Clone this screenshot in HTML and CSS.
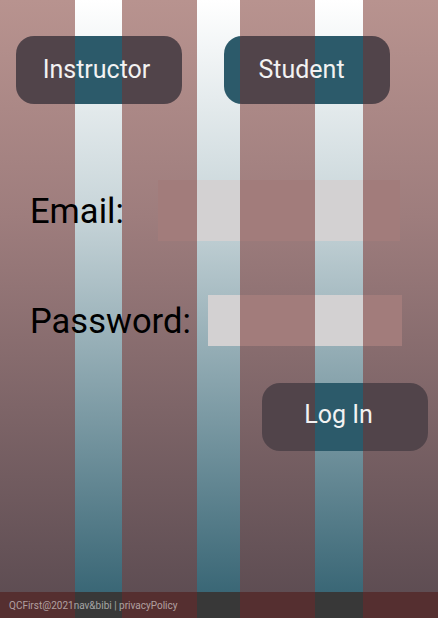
FILE: index.html
```html
<!DOCTYPE html>
<html lang="en">
<head>
<meta charset="utf-8">
<title>QCFirst Login</title>
<link rel="stylesheet" href="styles.css">
</head>
<body>
<div class="page">
  <main class="main">
    <div class="roles">
      <button class="btn btn-instructor">Instructor</button>
      <button class="btn btn-student">Student</button>
    </div>
    <form class="form">
      <div class="row row-email">
        <label class="label" for="email">Email:</label>
        <input class="field field-email" id="email" type="text">
      </div>
      <div class="row row-pass">
        <label class="label" for="pass">Password:</label>
        <input class="field field-pass" id="pass" type="password">
      </div>
      <div class="row-submit">
        <button type="button" class="btn btn-login">Log In</button>
      </div>
    </form>
  </main>
  <footer class="footer">QCFirst@2021nav&amp;bibi | privacyPolicy</footer>
</div>
</body>
</html>
```
FILE: styles.css
```css
html, body {
  margin: 0;
  padding: 0;
}
body {
  width: 438px;
  height: 618px;
  overflow: hidden;
  font-family: Roboto, "Noto Sans", sans-serif;
}
.page {
  height: 618px;
  display: flex;
  flex-direction: column;
  background:
    linear-gradient(#ffffff, #c9d6da 35%, #3a6776) 75px 0 / 47px 592px no-repeat,
    linear-gradient(#ffffff, #c9d6da 35%, #3a6776) 197px 0 / 43px 592px no-repeat,
    linear-gradient(#ffffff, #c9d6da 35%, #3a6776) 315px 0 / 48px 592px no-repeat,
    linear-gradient(#b8938f, #9e7d7d 35%, #5a4a50);
}
.main {
  flex: 1;
  display: flex;
  flex-direction: column;
}
.roles {
  display: flex;
  gap: 42px;
  padding: 36px 0 0 16px;
}
.btn {
  width: 166px;
  height: 68px;
  border: 0;
  border-radius: 18px;
  color: #f2f2f2;
  font-family: Roboto, sans-serif;
  font-size: 25px;
  padding: 0 11px 2px 0;
  background: linear-gradient(to right,
    #51444a 75px, #2c5a6a 75px 122px,
    #51444a 122px 197px, #2c5a6a 197px 240px,
    #51444a 240px 315px, #2c5a6a 315px 363px,
    #51444a 363px) fixed;
}
.btn-instructor {
  padding-right: 5px;
}
.btn-login {
  padding-bottom: 6px;
  padding-right: 13px;
}
.form {
  display: flex;
  flex-direction: column;
  padding: 76px 0 0 30px;
}
.row {
  display: flex;
  align-items: center;
}
.label {
  font-size: 34.5px;
  color: #000;
}
.field {
  border: 0;
  padding: 0;
  margin: 0;
  outline: none;
  background: linear-gradient(to right,
    #a27c7b 197px, #d3d1d2 197px 240px,
    #a27c7b 240px 315px, #d3d1d2 315px 363px,
    #a27c7b 363px) fixed;
}
.field-email {
  width: 242px;
  height: 61px;
  margin-left: 34px;
}
.row-pass {
  margin-top: 54px;
}
.field-pass {
  width: 194px;
  height: 51px;
  margin-left: 17px;
}
.row-submit {
  display: flex;
  padding: 37px 0 0 232px;
}
.footer {
  height: 26px;
  display: flex;
  align-items: center;
  padding-left: 9px;
  font-size: 10px;
  color: rgba(255, 255, 255, 0.55);
  background: linear-gradient(to right,
    #552f30 75px, #383838 75px 122px,
    #552f30 122px 197px, #383838 197px 240px,
    #552f30 240px 315px, #383838 315px 363px,
    #552f30 363px) fixed;
}
```
